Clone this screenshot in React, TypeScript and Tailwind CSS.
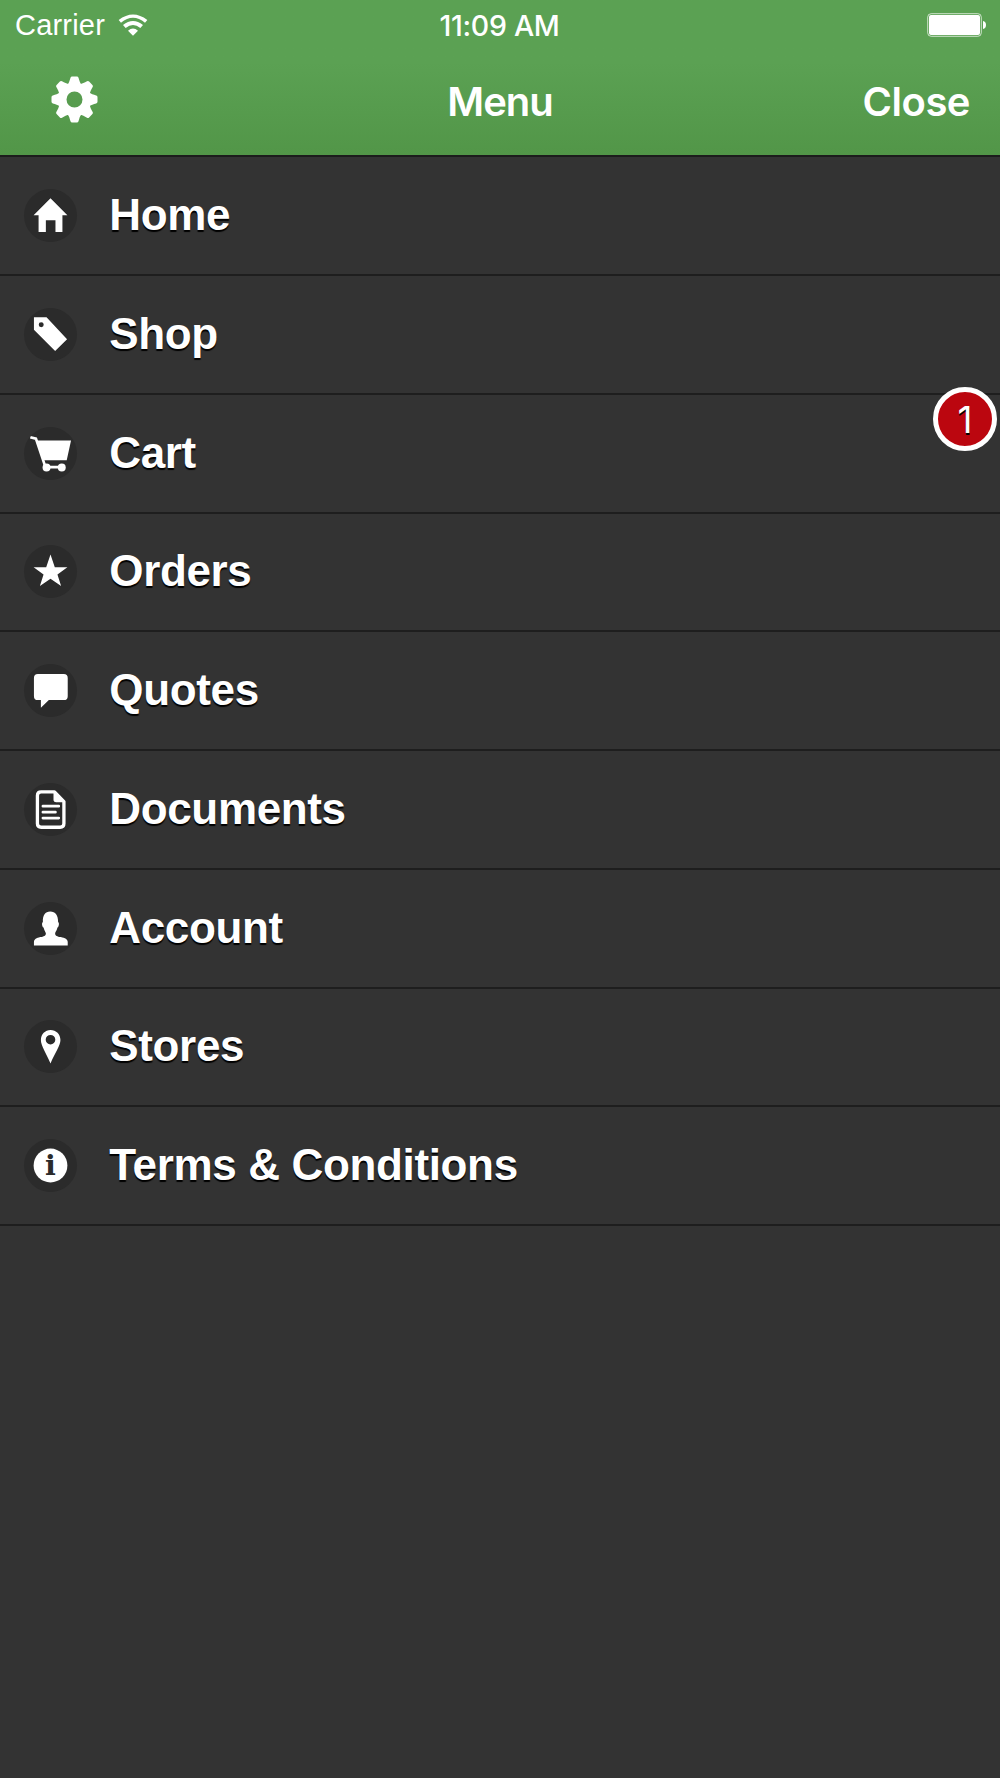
import type { ReactNode } from "react";

interface MenuItem {
  label: string;
  icon: ReactNode;
  badge?: number;
}

const MENU_ITEMS: MenuItem[] = [
  {
    label: "Home",
    icon: <path d="M80 28 131 79H116V130H95V94H66V130H44V79H29Z" />,
  },
  {
    label: "Shop",
    icon: (
      <path
        fillRule="evenodd"
        d="M30 28H68L130 94 94 130 30 66ZM52 43a7.5 7.5 0 1 0 0 15 7.5 7.5 0 0 0 0-15Z"
      />
    ),
  },
  {
    label: "Cart",
    badge: 1,
    icon: (
      <>
        <path d="M36 41H142L129 100H58Z" />
        <path d="M19 31 36 35 63 116" fill="none" stroke="currentColor" strokeWidth="8" />
        <path d="M68 121H113" stroke="currentColor" strokeWidth="8" />
        <circle cx="68" cy="122" r="12" />
        <circle cx="114" cy="122" r="12" />
      </>
    ),
  },
  {
    label: "Orders",
    icon: <path d="M80 29 93 67H131L101 89 112 124 80 102 48 124 59 89 29 67H67Z" />,
  },
  {
    label: "Quotes",
    icon: (
      <path d="M42 30H120Q132 30 132 42V97Q132 109 120 109H75L51 132V109H42Q30 109 30 97V42Q30 30 42 30Z" />
    ),
  },
  {
    label: "Documents",
    icon: (
      <>
        <path
          d="M92 27H52Q40.500 27 40.500 38V122Q40.500 133.500 52 133.500H109Q120.500 133.500 120.500 122V56Z"
          fill="none"
          stroke="currentColor"
          strokeWidth="10"
          strokeLinejoin="round"
        />
        <path d="M89 24 123 58H97Q89 58 89 50Z" />
        <path
          d="M57 70H105M57 88H95M57 106H105"
          stroke="currentColor"
          strokeWidth="8"
          strokeLinecap="round"
        />
      </>
    ),
  },
  {
    label: "Account",
    icon: (
      <path d="M79 29C95 29 103 41 103 60 107 62 106 74 101 77 99 86 95 90 94 94 94 102 100 104 111 106 124 109 132 113 132 121V131H30V121C30 113 38 109 49 106 60 104 66 102 66 94 64 89 61 85 59 77 54 74 53 62 57 60 56 41 64 29 79 29Z" />
    ),
  },
  {
    label: "Stores",
    icon: (
      <path
        fillRule="evenodd"
        d="M80 30C97 30 110 43 110 60 110 77 94 98 80 131 66 98 51 77 51 60 51 43 64 30 80 30ZM80 45a14.500 14.500 0 1 0 0 29 14.500 14.500 0 0 0 0-29Z"
      />
    ),
  },
  {
    label: "Terms & Conditions",
    icon: (
      <>
        <circle cx="80" cy="80" r="51" />
        <text
          x="80"
          y="110"
          textAnchor="middle"
          className="fill-[#2b2b2b] font-['DejaVu_Serif',serif] text-[86px] font-bold"
        >
          i
        </text>
      </>
    ),
  },
];

const GEAR_TEETH = [0, 45, 90, 135, 180, 225, 270, 315];

function WifiIcon() {
  return (
    <svg width="30" height="22" viewBox="0 0 90 66" fill="#fff">
      <path d="M2 18Q45 -15 88 18L81 26Q45 -3 9 26Z" />
      <path d="M15 33Q45 9 75 33L67 42Q45 24 23 42Z" />
      <path d="M45 65 30 50Q45 37 60 50Z" />
    </svg>
  );
}

function BatteryIcon() {
  return (
    <svg width="60" height="24" viewBox="0 0 60 24">
      <rect x="0.700" y="0.700" width="53.600" height="22.600" rx="3.500" fill="none" stroke="#fff" strokeOpacity="0.7" />
      <rect x="2" y="2" width="51" height="20" rx="2" fill="#fff" />
      <path d="M56 8Q59 8.500 59 12T56 16Z" fill="#fff" />
    </svg>
  );
}

function GearIcon() {
  return (
    <svg width="47" height="47" viewBox="-70.500 -70.500 141 141" fill="#fff">
      <circle r="37" fill="none" stroke="#fff" strokeWidth="26" />
      {GEAR_TEETH.map((angle) => (
        <path
          key={angle}
          d="M-23 -42C-15 -50 -15 -57 -12 -65Q-11 -69 -7 -69H7Q11 -69 12 -65C15 -57 15 -50 23 -42Z"
          transform={`rotate(${angle})`}
        />
      ))}
    </svg>
  );
}

function MenuRow({ label, icon, badge }: MenuItem) {
  return (
    <li className="relative flex h-[118.75px] items-center border-b-2 border-[#1e1e1e] pl-[24.3px]">
      <svg
        viewBox="0 0 160 160"
        className="size-[53px] shrink-0 rounded-full bg-[#2b2b2b] text-white"
        fill="currentColor"
      >
        {icon}
      </svg>
      <span className="-mt-px ml-[32px] text-[44px] leading-none font-bold tracking-[-0.35px] text-white [text-shadow:0_2px_1px_#000]">
        {label}
      </span>
      {badge && (
        <span className="absolute -top-[8px] right-[3px] flex size-[64px] items-center justify-center rounded-full border-5 border-white bg-[#bb060f] pt-px font-['Inter',sans-serif] text-[37px] leading-none text-white [text-shadow:0_2px_0_#000]">
          {badge}
        </span>
      )}
    </li>
  );
}

export default function App() {
  return (
    <div className="h-[1778px] w-[1000px] overflow-hidden bg-[#333] font-['Liberation_Sans',Arial,sans-serif]">
      <header className="h-[157.25px] border-b-2 border-[#1c1c1c] bg-linear-to-b from-[#5ba153] from-40% to-[#529648] text-white">
        <div className="grid h-[50px] grid-cols-3 items-center pr-[13px] pl-[15px]">
          <div className="flex items-center gap-[13px] text-[29px] leading-none tracking-[0.2px]">
            <span className="pt-px">Carrier</span>
            <WifiIcon />
          </div>
          <span className="pt-[2px] pr-[3px] text-center font-['Inter',sans-serif] text-[28.500px] leading-none font-medium tracking-[-0.3px]">
            11:09 AM
          </span>
          <div className="flex justify-end">
            <BatteryIcon />
          </div>
        </div>
        <div className="grid h-[105px] grid-cols-3 items-center px-[30px]">
          <button className="mb-[7px] ml-[21px] w-fit">
            <GearIcon />
          </button>
          <h1 className="pb-px text-center font-['Inter',sans-serif] text-[40px] leading-none font-semibold tracking-[-1px]">
            Menu
          </h1>
          <button className="pb-px text-right font-['Inter',sans-serif] text-[40px] leading-none font-semibold tracking-[-0.5px]">
            Close
          </button>
        </div>
      </header>
      <ul>
        {MENU_ITEMS.map((item) => (
          <MenuRow key={item.label} {...item} />
        ))}
      </ul>
    </div>
  );
}
